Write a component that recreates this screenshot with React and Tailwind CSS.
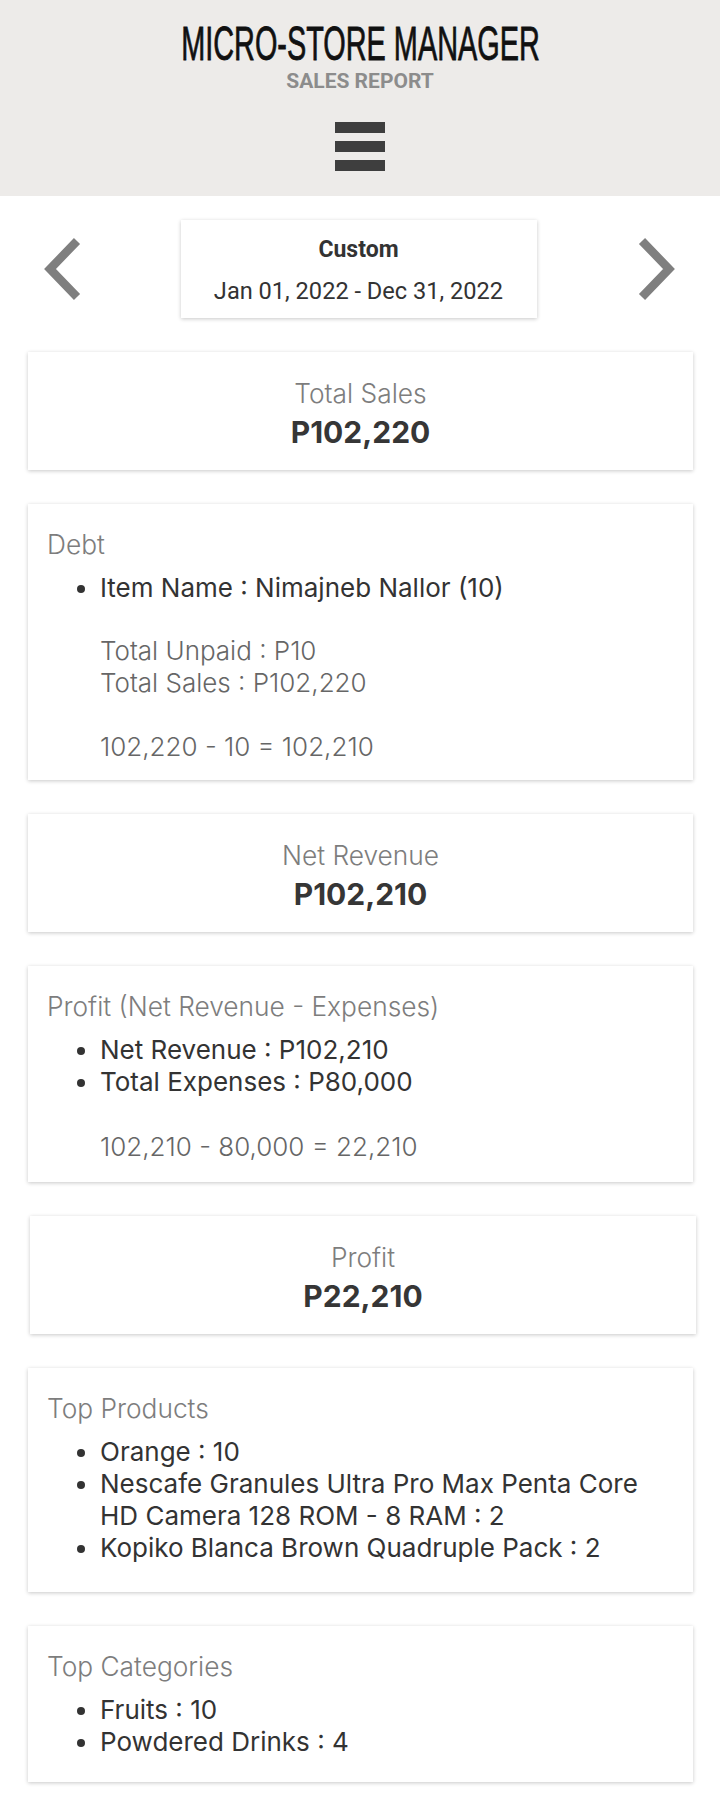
import React from "react";

const cardBase = "bg-white shadow-[0_1px_4px_rgba(0,0,0,0.22)]";
const labelCls = "text-[26.3px] leading-[32px] font-light text-[#7d7d7d]";
const itemCls = "text-[26px] leading-[32px] font-normal text-[#333333]";
const subCls = "text-[26px] leading-[32px] font-light text-[#666666]";

function Chevron({ dir }) {
  const pts = dir === "left" ? "33,3 6,31 33,59" : "3,3 30,31 3,59";
  return (
    <svg width="36" height="62" viewBox="0 0 36 62" className="overflow-visible shrink-0">
      <polyline points={pts} fill="none" stroke="#7f7f7f" strokeWidth="8.5" strokeLinejoin="miter" strokeLinecap="butt" />
    </svg>
  );
}

function StatCard({ label, value, extra = "ml-[28px] mr-[27px]" }) {
  return (
    <div className={`${cardBase} ${extra} pt-[26px] pb-[20px] flex flex-col items-center`}>
      <div className={labelCls}>{label}</div>
      <div className="mt-[4px] text-[30px] leading-[36px] font-bold text-[#363636]">{value}</div>
    </div>
  );
}

function ListCard({ label, children, pb }) {
  return (
    <div className={`${cardBase} ml-[28px] mr-[27px] pt-[25px] px-[19px] ${pb}`}>
      <div className={labelCls}>{label}</div>
      <div className="mt-[11px]">{children}</div>
    </div>
  );
}

function Bullets({ items }) {
  return (
    <ul className="list-disc pl-[53px] marker:text-[#333333]">
      {items.map((it, i) => (
        <li key={i} className={itemCls}>{it}</li>
      ))}
    </ul>
  );
}

export default function App() {
  return (
    <div className="min-h-[1818px] bg-white font-['Inter',sans-serif]">
      {/* Header */}
      <div className="bg-[#edebe9] h-[196px] flex flex-col items-center pt-[19px]">
        <div className="h-[49px] flex items-start justify-center">
          <span className="inline-block scale-x-[0.589] font-['Liberation_Sans',Arial,sans-serif] font-normal text-[49px] leading-[49px] text-[#111111] whitespace-nowrap [-webkit-text-stroke:0.8px_#111111]">
            MICRO-STORE MANAGER
          </span>
        </div>
        <div className="mt-[1px] font-['Roboto',sans-serif] font-bold text-[21px] leading-[24px] text-[#8c8c8c]">
          SALES REPORT
        </div>
        <div className="mt-[29px] flex flex-col gap-[8px]">
          <div className="w-[50px] h-[11px] bg-[#3e3e3e]" />
          <div className="w-[50px] h-[11px] bg-[#3e3e3e]" />
          <div className="w-[50px] h-[11px] bg-[#3e3e3e]" />
        </div>
      </div>

      {/* Date nav */}
      <div className="pt-[24px] pl-[44px] pr-[45px] flex items-center justify-between">
        <Chevron dir="left" />
        <div className="w-[356px] h-[98px] bg-white shadow-[0_1px_4px_rgba(0,0,0,0.22)] flex flex-col items-center pt-[17px] font-['Roboto',sans-serif] text-[#333333] mr-[2px]">
          <div className="text-[23px] leading-[26px] font-bold">Custom</div>
          <div className="mt-[14px] text-[23.6px] leading-[28px]">Jan 01, 2022 - Dec 31, 2022</div>
        </div>
        <Chevron dir="right" />
      </div>

      <div className="flex flex-col gap-[34px] pt-[34px] pb-[36px]">
        <StatCard label="Total Sales" value="P102,220" />

        <ListCard label="Debt" pb="pb-[17px]">
          <Bullets items={["Item Name : Nimajneb Nallor (10)"]} />
          <div className="pl-[53px] mt-[31px]">
            <div className={subCls}>Total Unpaid : P10</div>
            <div className={subCls}>Total Sales : P102,220</div>
            <div className={`${subCls} mt-[32px]`}>102,220 - 10 = 102,210</div>
          </div>
        </ListCard>

        <StatCard label="Net Revenue" value="P102,210" />

        <ListCard label="Profit (Net Revenue - Expenses)" pb="pb-[19px]">
          <Bullets items={["Net Revenue : P102,210", "Total Expenses : P80,000"]} />
          <div className="pl-[53px] mt-[33px]">
            <div className={subCls}>102,210 - 80,000 = 22,210</div>
          </div>
        </ListCard>

        <StatCard label="Profit" value="P22,210" extra="ml-[30px] mr-[24px]" />

        <ListCard label="Top Products" pb="pb-[28px]">
          <Bullets
            items={[
              "Orange : 10",
              <>
                Nescafe Granules Ultra Pro Max Penta Core
                <br />
                HD Camera 128 ROM - 8 RAM : 2
              </>,
              "Kopiko Blanca Brown Quadruple Pack : 2",
            ]}
          />
        </ListCard>

        <ListCard label="Top Categories" pb="pb-[24px]">
          <Bullets items={["Fruits : 10", "Powdered Drinks : 4"]} />
        </ListCard>
      </div>
    </div>
  );
}
